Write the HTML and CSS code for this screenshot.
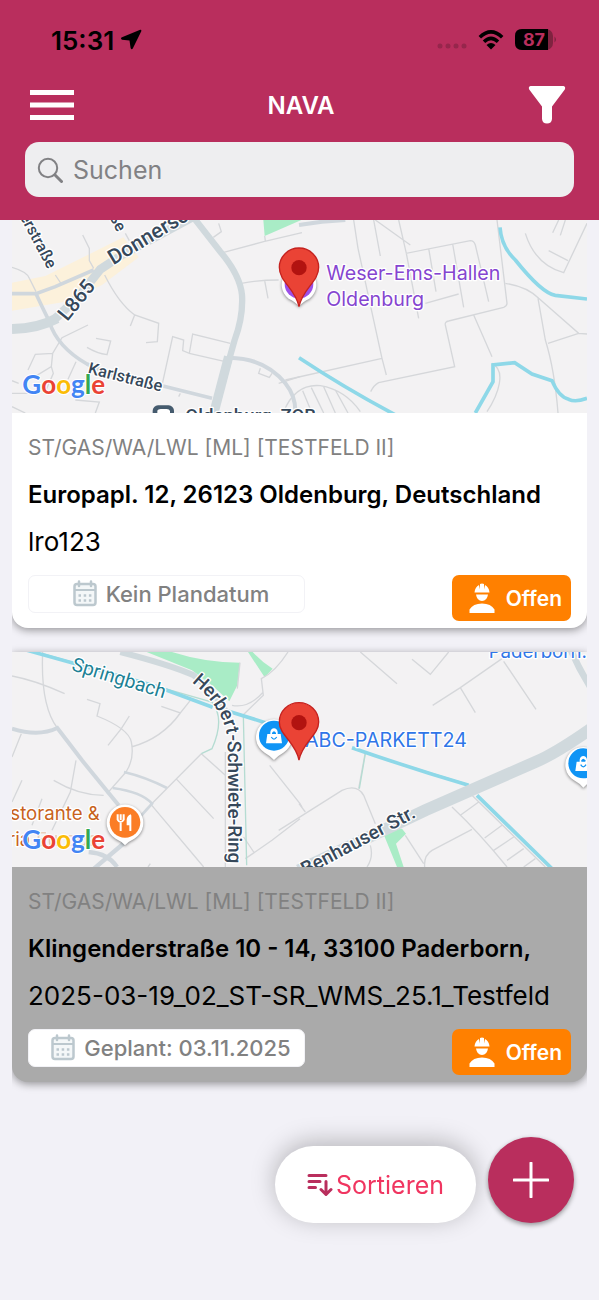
FILE: index.html
```html
<!DOCTYPE html>
<html lang="de">
<head>
    <meta charset="utf-8">
    <meta name="viewport" content="width=device-width, initial-scale=1">
    <title>NAVA</title>
    <link rel="stylesheet" href="styles.css">
</head>
<body>
    <header class="app-header">
        <div class="status-bar">
            <span class="clock">15:31</span>
            <svg class="location" viewBox="0 0 22 22" width="22" height="22">
                <path d="M20.200 .8 L1.400 8.600 Q.2 10 2 10.800 L9.500 11.500 L10.600 19 Q11.400 21 12.800 19.600 L21.400 2 Q21.400 .5 20.200 .8 Z"/>
            </svg>
            <svg class="dots" viewBox="0 0 32 6" width="32" height="6">
                <circle cx="4" cy="3" r="2.500"/><circle cx="12" cy="3" r="2.500"/><circle cx="20" cy="3" r="2.500"/><circle cx="28" cy="3" r="2.500"/>
            </svg>
            <svg class="wifi" viewBox="0 0 26 20" width="26" height="20">
                <path d="M1.800 7.200 Q13 -3.400 24.200 7.200 M6 11.700 Q13 5.200 20 11.700" fill="none" stroke="#000" stroke-width="3.600"/>
                <path d="M8.500 15 Q13 11.200 17.500 15 L13 19.500 Z"/>
            </svg>
            <svg class="battery" viewBox="0 0 44 22" width="44" height="22">
                <rect x="1" y="0" width="38" height="21" rx="7" fill="#7f2340"/>
                <path d="M8 0 H34 V21 H8 Q1 21 1 14 V7 Q1 0 8 0 Z"/>
                <path d="M40.500 7.500 Q43.500 10.500 40.500 13.500 Z" fill="#7f2340"/>
                <text x="20" y="17" text-anchor="middle" class="battery-level">87</text>
            </svg>
        </div>

        <div class="title-bar">
            <button type="button" class="icon-button" aria-label="Menü">
                <svg viewBox="0 0 44 32" width="44" height="32">
                    <path d="M0 3.500 H44 M0 16 H44 M0 28.500 H44" stroke="#fff" stroke-width="5"/>
                </svg>
            </button>
            <h1>NAVA</h1>
            <button type="button" class="icon-button" aria-label="Filter">
                <svg viewBox="0 0 38 40" width="38" height="40">
                    <path d="M2.500 1 H35.500 Q38 1.500 36.800 4.500 L24 21.500 V34 Q23.500 38.500 19 38.500 Q14.500 38.500 14 34 V21.500 L1.200 4.500 Q0 1.500 2.500 1 Z" fill="#fff"/>
                </svg>
            </button>
        </div>

        <label class="search">
            <svg viewBox="0 0 26 26" width="26" height="26">
                <circle cx="11" cy="11" r="9.200" fill="none" stroke="#818184" stroke-width="2"/>
                <path d="M17.800 17.800 L24.500 24.500" stroke="#818184" stroke-width="3" stroke-linecap="round"/>
            </svg>
            <input type="search" placeholder="Suchen" aria-label="Suchen">
        </label>
    </header>

    <main>
        <ul class="orders">
            <li>
                <article class="card">
                    <svg class="map" viewBox="0 0 1725 579" role="img" aria-label="Karte Oldenburg">
                        <rect width="1725" height="579" fill="#f3f2f3"/>
                        <path d="M0 188 L100 168 L334 52 L380 112 L270 195 L160 245 L0 272 Z" fill="#fcf1db"/>
                        <path d="M754 0 H868 L758 48 Z" fill="#a9ecc6"/>
                        <g class="lane">
                            <path d="M212 45 L232 85 V122 L245 145 M340 40 L352 62 M0 142 Q45 155 52 175 L72 215 M130 165 L150 195"/>
                            <path d="M278 165 Q320 250 368 285 L440 310 L436 365 L402 368 M368 285 L355 318"/>
                            <path d="M228 315 L150 353 L122 400 L70 403 L48 450 M122 400 L118 440 L60 475 M118 440 L124 460 L98 520 M0 482 L20 490 M0 520 H60 M192 425 L168 478"/>
                            <path d="M225 382 Q255 400 285 404 L296 363 L252 355"/>
                            <path d="M448 505 L482 350 L515 360 L512 392 L532 400 L542 342 L655 370 M532 400 L640 425"/>
                            <path d="M620 10 L628 35 L604 52 M635 97 L755 65 L870 38 M758 48 L760 62 M688 190 Q740 180 800 180 M758 182 L768 235 M745 445 L740 460 L772 472 L780 460"/>
                            <path d="M820 480 L1110 415 M1090 0 L1195 75 M1025 0 L1038 85 L1110 415 L1123 465 M1085 0 L1105 108 M1160 0 L1183 100 L1375 62 Q1386 62 1390 75 L1430 245 M1183 100 L1220 295 M1250 85 L1272 215 M1322 72 L1355 262 M1240 250 L1340 222"/>
                            <path d="M1455 0 L1485 250 Q1485 258 1475 262 L1310 303 Q1298 305 1300 315 L1328 440 L1100 488 Q1086 495 1076 515"/>
                            <path d="M1385 285 L1440 410 M1480 190 Q1545 200 1580 235 L1700 340 L1725 342 M1578 235 L1600 360 Q1628 450 1638 579 M1608 370 L1700 340 M1440 430 Q1470 445 1462 490 Q1455 530 1425 575"/>
                            <path d="M1540 40 Q1570 135 1655 158 L1725 10 M1610 92 L1668 122 M1640 0 L1622 38 M1660 0 L1645 46"/>
                            <path d="M815 575 Q850 490 925 497 Q1000 510 1045 575 M872 512 L900 579 M898 503 L935 579 M935 500 L970 579 M970 510 L1008 579"/>
                            <path d="M800 490 L864 470 M0 560 L40 579 M190 540 L262 546 L250 579 M500 530 L505 520"/>
                        </g>
                        <g class="street">
                            <path d="M0 221 H72 L130 200 L245 150" stroke-width="11"/>
                            <path d="M72 221 Q90 260 112 305 Q135 380 225 432 L300 465 L462 500 L600 535" stroke-width="11"/>
                            <path d="M652 413 Q760 415 820 490 Q852 530 850 579" stroke-width="12"/>
                            <path d="M861 15 L930 5 L1000 0" stroke-width="12"/>
                        </g>
                        <path class="road" d="M0 327 Q80 325 135 295" stroke-width="30"/>
                        <path class="road" d="M125 300 L200 230 L265 148 L330 105 L540 -8" stroke-width="26"/>
                        <path class="road" d="M535 -20 L625 95 Q684 165 690 225 Q694 290 668 360 L600 600" stroke-width="19"/>
                        <path class="road" d="M650 410 L600 600" stroke-width="28"/>
                        <g class="water">
                            <path d="M1464 22 Q1468 80 1510 120 Q1590 220 1630 226 L1725 237"/>
                            <path d="M1390 579 L1443 485 V435 L1508 428 L1560 462 L1620 482 Q1640 530 1670 538 Q1690 548 1725 535"/>
                            <path d="M861 413 Q1000 505 1160 590"/>
                        </g>
                        <g class="label street-label">
                            <text transform="translate(10 -34) rotate(62)" font-size="48">nerstraße</text>
                            <text transform="translate(278 -34) rotate(62)" font-size="48">aße</text>
                            <text transform="translate(304 136) rotate(-31)" font-size="63">Donnerschweer</text>
                            <text transform="translate(166 306) rotate(-51)" font-size="61">L865</text>
                            <text transform="translate(226 460) rotate(14)" font-size="49">Karlstraße</text>
                            <text x="520" y="606" font-size="56">Oldenburg, ZOB</text>
                        </g>
                        <rect x="422" y="556" width="64" height="60" rx="16" fill="#455b6e"/>
                        <path d="M436 579 V572 Q438 567 446 567 H464 Q472 567 474 572 V579 Z" fill="#fff"/>
                        <path d="M861 260 Q852 246 830 236 A52 52 0 1 1 892 236 Q870 246 861 260 Z" class="poi"/>
                        <circle cx="861" cy="192" r="43" fill="#9c4fe8"/>
                        <g class="label place" fill="#8545d0">
                            <text x="943" y="179" font-size="59">Weser-Ems-Hallen</text>
                            <text x="943" y="257" font-size="59">Oldenburg</text>
                        </g>
                        <path class="pin" d="M861 260 C850 205 802 186 802 142 A59 58 0 0 1 920 142 C920 186 872 205 861 260 Z"/>
                        <circle cx="861" cy="143" r="23" fill="#b21310"/>
                        <text x="31" y="523" class="google"><tspan fill="#4285f4">G</tspan><tspan fill="#ea4335">o</tspan><tspan fill="#fbbc05">o</tspan><tspan fill="#4285f4">g</tspan><tspan fill="#34a853">l</tspan><tspan fill="#ea4335">e</tspan></text>
                    </svg>
                    <div class="card-body">
                        <p class="category">ST/GAS/WA/LWL [ML] [TESTFELD II]</p>
                        <h2>Europapl. 12, 26123 Oldenburg, Deutschland</h2>
                        <p class="name">lro123</p>
                        <div class="card-footer">
                            <button type="button" class="date">
                                <svg viewBox="0 0 26 28" width="26" height="28"><use href="#calendar"/></svg>
                                Kein Plandatum
                            </button>
                            <button type="button" class="state">
                                <svg viewBox="0 0 26 30" width="26" height="30"><use href="#worker"/></svg>
                                Offen
                            </button>
                        </div>
                    </div>
                </article>
            </li>
            <li>
                <article class="card planned">
                    <svg class="map" viewBox="0 0 1725 645" role="img" aria-label="Karte Paderborn">
                        <rect width="1725" height="645" fill="#f3f2f3"/>
                        <path d="M404 0 H480 Q580 32 684 32 L676 100 L652 148 L600 100 L540 55 Z M708 0 H722 Q750 30 782 50 L758 76 Z" fill="#a9ecc6"/>
                        <path d="M1112 540 L1170 530 L1182 545 L1152 575 L1175 645 H1155 Z" fill="#a9ecc6"/>
                        <g class="lane">
                            <path d="M92 0 Q85 160 136 228 M0 72 Q70 85 158 125 M0 315 L28 245 M0 450 L30 385 M90 440 L60 520"/>
                            <path d="M225 142 L264 155 L255 192 Q350 230 358 270 Q368 320 342 360 L285 425 M448 163 L505 183 L535 145 M505 183 Q450 260 358 285 M352 192 L328 230 L288 280"/>
                            <path d="M192 325 L175 420 L120 535 M125 385 Q200 430 275 430 M568 305 L400 475 M568 305 L640 370 M492 380 L605 500 M415 455 L575 645"/>
                            <path d="M828 0 Q790 60 748 80 L754 130 L694 188 M754 120 Q710 170 660 160 M684 32 L676 110"/>
                            <path d="M773 340 L864 455 L870 465 M864 500 L780 565 L700 620 M695 555 L725 600"/>
                            <path d="M1045 0 L1155 95 M1200 22 L1255 67 L1310 0 M1262 160 L1345 107 L1470 20 M1345 107 L1390 182 M1475 28 L1572 172"/>
                            <path d="M800 535 L990 415 Q1035 395 1055 430 L1090 515 M861 455 L880 480 M1040 410 L1060 300 M1180 550 L1235 635 M1380 532 L1260 595 Q1235 610 1238 645"/>
                            <path d="M1320 465 Q1400 540 1485 645 M1400 450 L1345 490 M1470 520 L1418 558 M1505 555 L1445 595 M1535 590 L1485 625 M1570 620 L1535 645 M1380 430 L1600 645 M1075 580 Q1085 615 1065 645 M408 645 L415 635"/>
                        </g>
                        <path d="M92 5 L600 150 Q640 200 600 290 L568 305 M694 190 L704 640 M1020 290 L1360 395 M1060 305 L1042 410" fill="none" stroke="#b5dcd2" stroke-width="4"/>
                        <path class="water" d="M45 -5 L430 102 L602 166 M640 175 L760 212 M1020 287 Q1200 350 1370 400 M1395 430 L1620 650"/>
                        <g class="street">
                            <path d="M0 230 Q80 255 136 228 L210 325 L320 460" stroke-width="12"/>
                            <path d="M336 360 Q400 375 465 408 M302 408 Q390 420 420 455 L370 510" stroke-width="8"/>
                            <path d="M340 570 L240 655 M230 600 Q290 605 315 645" stroke-width="13"/>
                        </g>
                        <path class="road" d="M325 0 Q480 40 545 70 Q600 110 640 175" stroke-width="18"/>
                        <path class="road" d="M860 655 L1240 475 L1570 330 Q1630 305 1740 228" stroke-width="36"/>
                        <path class="road" d="M1675 -10 Q1700 50 1735 105" stroke-width="20"/>
                        <path d="M640 300 V645" stroke="#d5d7da" stroke-width="4"/>
                        <path id="ringPath" d="M539 90 Q632 165 646 255 Q650 350 648 680" fill="none"/>
                        <g class="label street-label">
                            <text font-size="57"><textPath href="#ringPath">Herbert-Schwiete-Ring</textPath></text>
                            <text transform="translate(880 672) rotate(-28)" font-size="58">Benhauser Str.</text>
                        </g>
                        <text class="label" transform="translate(176 54) rotate(17)" font-size="58" fill="#1c8195">Springbach</text>
                        <g class="label place" fill="#2f76e8">
                            <text x="1430" y="17" font-size="56">Paderborn.</text>
                            <text x="879" y="284" font-size="59">ABC-PARKETT24</text>
                        </g>
                        <g class="label place" fill="#c8621c">
                            <text x="-5" y="504" font-size="56">storante &amp;</text>
                            <text x="-12" y="582" font-size="56">ria</text>
                            <text x="72" y="582" font-size="56" opacity=".25">Europa</text>
                        </g>
                        <g id="shop">
                            <path class="poi" d="M786 324 Q776 312 758 302 A54 54 0 1 1 814 302 Q796 312 786 324 Z"/>
                            <circle cx="786" cy="251" r="45" fill="#0f94f5"/>
                            <path d="M766 246 H806 L810 274 H762 Z M775 246 V240 Q777 229 786 229 Q795 229 797 240 V246" fill="#fff"/>
                            <path d="M780 246 V242 Q786 233 792 242 V246 Z" fill="#0f94f5"/>
                            <path d="M778 255 Q786 268 794 255" fill="none" stroke="#0f94f5" stroke-width="4"/>
                        </g>
                        <use href="#shop" x="928" y="83"/>
                        <path class="poi" d="M339 580 Q329 568 311 560 A55 55 0 1 1 367 560 Q349 568 339 580 Z"/>
                        <circle cx="339" cy="511" r="46" fill="#fb7d25"/>
                        <path d="M317 487 V504 M326 487 V504 M335 487 V504 M317 503 Q326 517 335 503 M326 507 V537 M355 490 V537" fill="none" stroke="#fff" stroke-width="6"/>
                        <path d="M357 487 V520 H344 V504 Q345 490 357 487 Z" fill="#fff"/>
                        <path class="pin" d="M861 324 C850 269 802 250 802 210 A59 58 0 0 1 920 210 C920 250 872 269 861 324 Z"/>
                        <circle cx="861" cy="212" r="23" fill="#b21310"/>
                        <text x="31" y="592" class="google"><tspan fill="#4285f4">G</tspan><tspan fill="#ea4335">o</tspan><tspan fill="#fbbc05">o</tspan><tspan fill="#4285f4">g</tspan><tspan fill="#34a853">l</tspan><tspan fill="#ea4335">e</tspan></text>
                    </svg>
                    <div class="card-body">
                        <p class="category">ST/GAS/WA/LWL [ML] [TESTFELD II]</p>
                        <h2>Klingenderstraße 10 - 14, 33100 Paderborn,</h2>
                        <p class="name">2025-03-19_02_ST-SR_WMS_25.1_Testfeld</p>
                        <div class="card-footer">
                            <button type="button" class="date">
                                <svg viewBox="0 0 26 28" width="26" height="28"><use href="#calendar"/></svg>
                                Geplant: 03.11.2025
                            </button>
                            <button type="button" class="state">
                                <svg viewBox="0 0 26 30" width="26" height="30"><use href="#worker"/></svg>
                                Offen
                            </button>
                        </div>
                    </div>
                </article>
            </li>
        </ul>
    </main>

    <div class="actions">
        <button type="button" class="sort">
            <svg viewBox="0 0 26 24" width="26" height="24">
                <path d="M2 2.500 H19 M2 8.500 H13 M2 14.500 H8.500 M19 8.500 V20 M14 16.500 L19 21.500 L24 16.500" fill="none" stroke="#b92e5d" stroke-width="3" stroke-linecap="round" stroke-linejoin="round"/>
            </svg>
            Sortieren
        </button>
        <button type="button" class="add" aria-label="Neu">
            <svg viewBox="0 0 36 36" width="36" height="36">
                <path d="M1 18 H35 M18 1 V35" stroke="#fff" stroke-width="3" stroke-linecap="round"/>
            </svg>
        </button>
    </div>

    <!-- shared icons -->
    <svg class="sprite">
        <symbol id="calendar" viewBox="0 0 26 28">
            <rect x="2.500" y="4" width="21" height="21" rx="2.500" fill="#f4f7f8" stroke="#bcc8ce" stroke-width="2.500"/>
            <path d="M2 10 H24" stroke="#bcc8ce" stroke-width="2"/>
            <path d="M7 1.500 V6 M19 1.500 V6" stroke="#bcc8ce" stroke-width="2.500" stroke-linecap="round"/>
            <path d="M6.500 15.500 H20 M6.500 20.500 H20" stroke="#bcc8ce" stroke-width="2.500" stroke-dasharray="2.500 2.700"/>
        </symbol>
        <symbol id="worker" viewBox="0 0 26 30">
            <path d="M5.500 9.500 Q6 4 10 2 L11 6.500 V1 Q13 .2 15 1 V6.500 L16 2 Q20 4 20.500 9.500 Z M7 11.500 H19 Q18 18 13 18 Q8 18 7 11.500 Z M.5 30 V26.500 Q4 20.500 13 20.500 Q22 20.500 25.500 26.500 V30 Z" fill="#fff"/>
        </symbol>
    </svg>
</body>
</html>
```
FILE: styles.css
```css
* {
    box-sizing: border-box;
}

body {
    margin: 0;
    background-color: #f2f1f7;
    color: #000;
    font-family: Inter, "Liberation Sans", sans-serif;
}

button {
    border: none;
    padding: 0;
    font-family: inherit;
    cursor: pointer;
}

svg {
    display: block;
    flex-shrink: 0;
}

.app-header {
    background-color: #b92e5d;
    height: 220px;
    padding: 24px 25px 0;
}

.status-bar {
    display: flex;
    align-items: center;
    height: 32px;
    padding: 0 16px 0 26px;
}

.clock {
    font-size: 26px;
    font-weight: 600;
}

.location {
    margin-left: 6px;
    margin-right: auto;
}

.dots {
    fill: #96264c;
    margin-top: 12px;
}

.wifi {
    margin: 0 10px;
}

.battery-level {
    font-size: 18px;
    font-weight: 700;
    fill: #b92e5d;
}

.title-bar {
    display: flex;
    align-items: center;
    justify-content: space-between;
    height: 62px;
    margin: 18px 8px 0 5px;
}

.icon-button {
    background: none;
}

h1 {
    margin: 0;
    color: #fff;
    font-size: 24px;
    font-weight: 600;
}

.search {
    display: flex;
    align-items: center;
    gap: 10px;
    height: 55px;
    margin-top: 6px;
    padding: 0 12px;
    border-radius: 14px;
    background-color: #eeeef0;
}

.search input {
    flex: 1;
    min-width: 0;
    padding: 0;
    border: none;
    outline: none;
    background: none;
    font-family: inherit;
    font-size: 25px;
}

.search input::placeholder {
    color: #818184;
}

.orders {
    list-style: none;
    margin: 0 12px;
    padding: 0;
}

.orders li {
    overflow: hidden;
    padding: 12px 0;
}

.orders li:first-child {
    padding-top: 0;
}

.card {
    border-radius: 0 0 16px 16px;
    background-color: #fff;
    box-shadow: 0 2px 8px rgba(0, 0, 0, 0.4);
}

.planned {
    background-color: #aaa;
}

.map {
    width: 100%;
    height: auto;
}

.lane {
    fill: none;
    stroke: #d5d7da;
    stroke-width: 4;
}

.street {
    fill: none;
    stroke: #d0d7dd;
}

.road {
    fill: none;
    stroke: #d0d9dd;
}

.water {
    fill: none;
    stroke: #8ed8e8;
    stroke-width: 11;
}

.label {
    font-family: Roboto, sans-serif;
    paint-order: stroke;
    stroke: #fff;
    stroke-width: 8px;
    stroke-linejoin: round;
}

.street-label {
    fill: #36485a;
    font-weight: 500;
}

.place {
    font-family: Inter, sans-serif;
}

.poi {
    fill: #fff;
    filter: drop-shadow(0 3px 4px rgba(0, 0, 0, 0.45));
}

.pin {
    fill: #ea4335;
    stroke: #c5221f;
    stroke-width: 4px;
}

.google {
    font-family: Lato, sans-serif;
    font-size: 78px;
    font-weight: 700;
    paint-order: stroke;
    stroke: #fff;
    stroke-width: 6px;
}

.card-body {
    padding: 11px 16px 7px;
}

.card-body p,
.card-body h2 {
    margin: 0;
    line-height: 47px;
    white-space: nowrap;
}

.card-body .category {
    color: #818181;
    font-size: 21px;
}

.card-body h2 {
    font-size: 24px;
    font-weight: 600;
}

.card-body .name {
    font-size: 26px;
}

.card-footer {
    display: flex;
    align-items: flex-start;
    justify-content: space-between;
    margin-top: 10px;
}

.date,
.state {
    display: flex;
    align-items: center;
    border-radius: 7px;
    font-weight: 600;
}

.date {
    flex: 0 0 51%;
    justify-content: center;
    gap: 8px;
    height: 38px;
    padding-left: 8px;
    border: 1px solid #f2f2f6;
    background-color: #fff;
    color: #818181;
    font-size: 22px;
    font-weight: 500;
}

.state {
    gap: 11px;
    height: 46px;
    padding: 0 9px 0 17px;
    background-color: #ff8000;
    color: #fff;
    font-size: 21px;
}

.actions {
    position: fixed;
    right: 25px;
    bottom: 77px;
    display: flex;
    align-items: flex-end;
    gap: 12px;
}

.sort {
    display: flex;
    align-items: center;
    gap: 3px;
    height: 77px;
    padding: 0 32px;
    border-radius: 39px;
    background-color: #fff;
    box-shadow: 0 -4px 24px rgba(0, 0, 0, 0.25);
    color: #f03560;
    font-size: 25px;
}

.add {
    display: flex;
    align-items: center;
    justify-content: center;
    width: 86px;
    height: 86px;
    border-radius: 50%;
    background-color: #b92e5d;
    box-shadow: 0 2px 5px rgba(0, 0, 0, 0.4);
}

.sprite {
    position: absolute;
    width: 0;
    height: 0;
}
```
